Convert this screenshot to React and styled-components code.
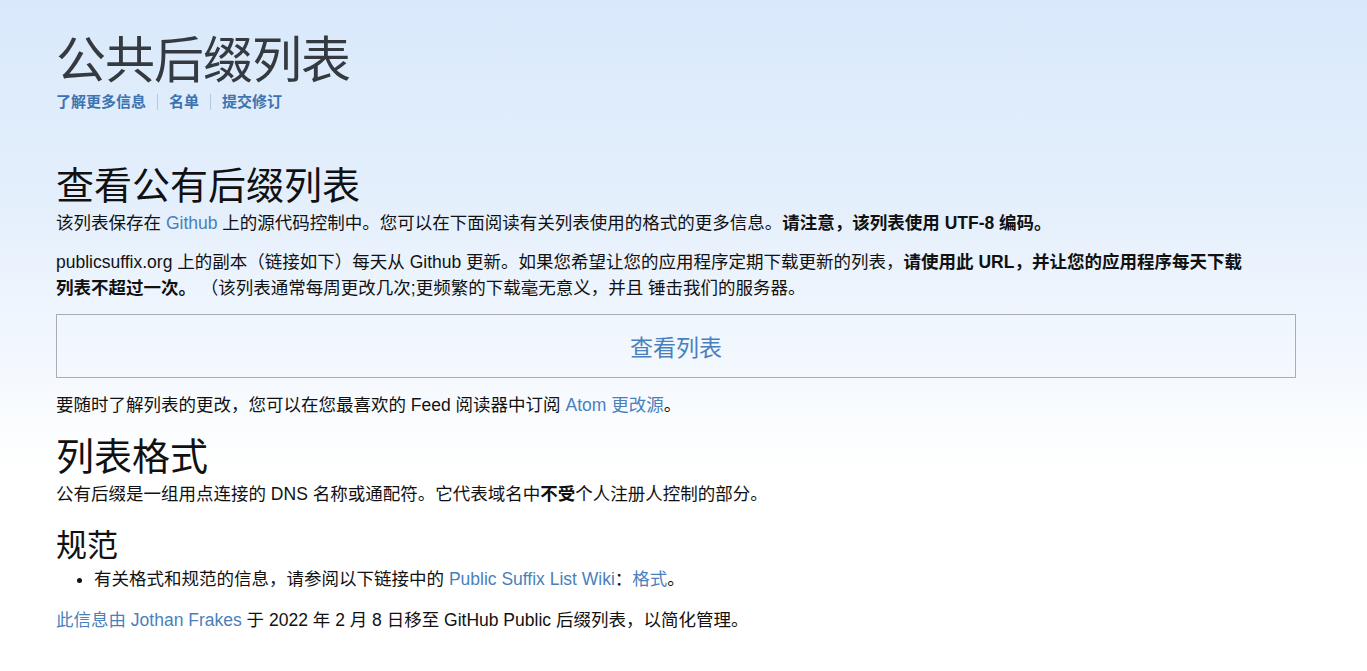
import styled, { createGlobalStyle } from 'styled-components'

const GlobalStyle = createGlobalStyle`
  html, body {
    margin: 0;
    padding: 0;
  }
  body {
    font-family: "Liberation Sans", "Noto Sans CJK SC", sans-serif;
    color: #111;
    background: linear-gradient(180deg, #d9e9fb 0px, #e4effc 200px, #f3f8fe 360px, #ffffff 470px);
    min-height: 100vh;
  }
`

const Page = styled.main`
  padding: 28px 71px 40px 56px;
`

const Header = styled.header`
  margin-bottom: 52px;
`

const SiteTitle = styled.h1`
  margin: 0;
  font-size: 50px;
  font-weight: 400;
  line-height: 66px;
  color: #343a40;
  letter-spacing: -1px;
`

const Nav = styled.nav`
  display: flex;
  align-items: center;
`

const NavLink = styled.a`
  font-size: 15px;
  font-weight: 700;
  color: #3d73b1;
  text-decoration: none;
  padding: 0 11px;
  line-height: 16px;
  border-left: ${p => (p.$first ? 'none' : '1px solid #b8c8dc')};
  &:first-child {
    padding-left: 0;
  }
`

const Heading = styled.h2`
  margin: 0;
  font-size: ${p => p.$size || 38}px;
  font-weight: 400;
  line-height: ${p => p.$lh || 48}px;
  color: #111;
`

const Para = styled.p`
  margin: ${p => p.$mt || 0}px 0 0;
  max-width: ${p => p.$max || 1240}px;
  font-size: 17.5px;
  line-height: 26px;
`

const Link = styled.a`
  color: #4a7fbd;
  text-decoration: none;
`

const ListButton = styled.a`
  display: flex;
  align-items: center;
  justify-content: center;
  height: 62px;
  margin-top: 13px;
  border: 1px solid #a9aeb5;
  font-size: 23px;
  color: #4a7fbd;
  text-decoration: none;
`

const Bullets = styled.ul`
  margin: 0;
  padding-left: 38px;
  font-size: 17.5px;
  line-height: 26px;
`

const Section = styled.section`
  margin-top: ${p => p.$mt || 0}px;
`

export default function App() {
  return (
    <>
      <GlobalStyle />
      <Page>
        <Header>
          <SiteTitle>公共后缀列表</SiteTitle>
          <Nav>
            <NavLink $first href="#">了解更多信息</NavLink>
            <NavLink href="#">名单</NavLink>
            <NavLink href="#">提交修订</NavLink>
          </Nav>
        </Header>

        <Section>
          <Heading>查看公有后缀列表</Heading>
          <Para>
            该列表保存在 <Link href="#">Github</Link> 上的源代码控制中。您可以在下面阅读有关列表使用的格式的更多信息。<b>请注意，该列表使用 UTF-8 编码。</b>
          </Para>
          <Para $mt={13} $max={1200}>
            publicsuffix.org 上的副本（链接如下）每天从 Github 更新。如果您希望让您的应用程序定期下载更新的列表，<b>请使用此 URL，并让您的应用程序每天下载列表不超过一次。</b> （该列表通常每周更改几次;更频繁的下载毫无意义，并且 锤击我们的服务器。
          </Para>
          <ListButton href="#">查看列表</ListButton>
          <Para $mt={14}>
            要随时了解列表的更改，您可以在您最喜欢的 Feed 阅读器中订阅 <Link href="#">Atom 更改源</Link>。
          </Para>
        </Section>

        <Section $mt={15}>
          <Heading>列表格式</Heading>
          <Para>
            公有后缀是一组用点连接的 DNS 名称或通配符。它代表域名中<b>不受</b>个人注册人控制的部分。
          </Para>
        </Section>

        <Section $mt={19}>
          <Heading $size={31} $lh={40}>规范</Heading>
          <Bullets>
            <li>
              有关格式和规范的信息，请参阅以下链接中的 <Link href="#">Public Suffix List Wiki</Link>：<Link href="#">格式</Link>。
            </li>
          </Bullets>
          <Para $mt={15}>
            <Link href="#">此信息由 Jothan Frakes</Link> 于 2022 年 2 月 8 日移至 GitHub Public 后缀列表，以简化管理。
          </Para>
        </Section>
      </Page>
    </>
  )
}
